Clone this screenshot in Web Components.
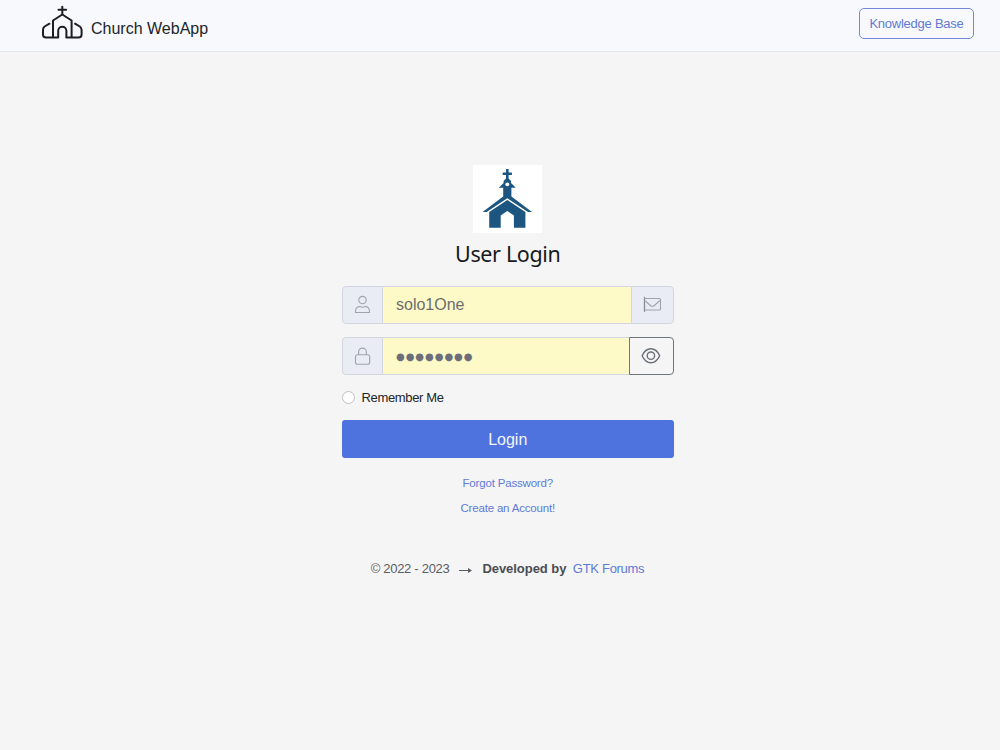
<!DOCTYPE html>
<html lang="en">
<head>
<meta charset="utf-8">
<title>Church WebApp</title>
<style>
  body {
    margin: 0;
    min-height: 750px;
    background: #f5f5f5;
    color: #212529;
    font-family: "Liberation Sans", Arial, sans-serif;
    font-size: 16px;
  }
</style>
</head>
<body>

<app-header brand="Church WebApp">
  <outline-link>Knowledge Base</outline-link>
</app-header>

<login-card heading="User Login">
  <input-row value="solo1One">
    <app-icon slot="before" name="person"></app-icon>
    <app-icon slot="after" name="mail"></app-icon>
  </input-row>
  <input-row value="●●●●●●●●" secret>
    <app-icon slot="before" name="lock"></app-icon>
    <app-icon slot="after" name="eye"></app-icon>
  </input-row>
  <remember-me>Remember Me</remember-me>
  <login-button>Login</login-button>
  <text-link slot="links">Forgot Password?</text-link>
  <text-link slot="links">Create an Account!</text-link>
</login-card>

<app-footer>
  <span slot="years">© 2022 - 2023</span>
  <span slot="label">Developed by</span>
  <text-link slot="link">GTK Forums</text-link>
</app-footer>

<script>
const icons = {
  person: '<circle cx="7.500" cy="4.100" r="3.700"/><path d="M.5 16.500v-.8c0-3 1.800-5.200 4.400-5.200q2.600 1.400 5.200 0c2.600 0 4.400 2.200 4.400 5.200v.8z"/>',
  lock: '<rect x=".5" y="7.800" width="14.200" height="9.400" rx="2"/><path d="M3.600 7.800V5a3.900 3.900 0 0 1 7.800 0v2.800"/>',
  mail: '<path d="M.5 .8v15" stroke-width="1.300" stroke="#858b96"/><path d="M.5 2.500h15q1 0 1 1v9.500q0 1-1 1H.5M1.500 5l4.800 4.500q2 1.500 4 0L16 4.500"/>',
  eye: '<path d="M-.9 8.700C3.300-.6 12.500-.6 16.700 8.700 12.500 18 3.300 18-.9 8.700z"/><circle cx="7.900" cy="8.700" r="3.700"/>'
};

class AppIcon extends HTMLElement {
  constructor () {
    super();
    this.attachShadow({ mode: 'open' });
  }

  connectedCallback () {
    const name = this.getAttribute('name');
    this.shadowRoot.innerHTML = `
    <style>
      :host { display: block; width: 16px; height: 18px; }
      svg {
        display: block;
        overflow: visible;
        fill: none;
        stroke: ${name === 'eye' ? '#6a7076' : '#9fa3ab'};
        stroke-width: ${name === 'eye' ? 1.4 : 1.1};
        stroke-linejoin: round;
      }
    </style>
    <svg width="16" height="18" viewBox="0 0 16 18">${icons[name]}</svg>`;
  }
}

class AppHeader extends HTMLElement {
  constructor () {
    super();
    this.attachShadow({ mode: 'open' });
  }

  connectedCallback () {
    this.shadowRoot.innerHTML = `
    <style>
      :host {
        display: flex;
        justify-content: space-between;
        align-items: flex-start;
        box-sizing: border-box;
        height: 52px;
        padding: 5px 26px 0 41px;
        background: #f8f9fd;
        border-bottom: 1px solid #e3e6ee;
      }
      .brand { display: flex; gap: 8px; }
      .brand span { margin-top: 14px; line-height: 19px; font-size: 16px; }
      svg {
        fill: none;
        stroke: #1d1f22;
        stroke-width: 2;
        stroke-linecap: round;
        stroke-linejoin: round;
      }
      ::slotted(*) { margin-top: 3px; }
    </style>
    <div class="brand">
      <svg width="42" height="35" viewBox="0 0 42 35">
        <path d="M21.300 1.800V9M17.500 4.700h7.600"/>
        <path d="M12 32V15.500L21.300 9.500l9.300 6V32"/>
        <path d="M17.200 32v-6.200a4.100 4.100 0 0 1 8.200 0V32"/>
        <path d="M8.500 18.700L3.600 21.500Q2 22.800 2 25v4.500q0 3 3 3H17.200M25.400 32.500H37.600q3 0 3-3V25q0-2.200-1.800-3.500L34 18.700"/>
      </svg>
      <span>${this.getAttribute('brand')}</span>
    </div>
    <slot></slot>`;
  }
}

class OutlineLink extends HTMLElement {
  constructor () {
    super();
    this.attachShadow({ mode: 'open' });
    this.shadowRoot.innerHTML = `
    <style>
      :host {
        display: block;
        box-sizing: border-box;
        width: 115px;
        height: 31px;
        border: 1px solid #7389d8;
        border-radius: 5px;
        color: #6179d3;
        font-size: 13px;
        letter-spacing: -0.25px;
        line-height: 29px;
        text-align: center;
        white-space: nowrap;
      }
    </style>
    <slot></slot>`;
  }
}

class LoginCard extends HTMLElement {
  constructor () {
    super();
    this.attachShadow({ mode: 'open' });
  }

  connectedCallback () {
    this.shadowRoot.innerHTML = `
    <style>
      :host {
        display: flex;
        flex-direction: column;
        width: 331.5px;
        margin: 113px 0 0 342px;
      }
      .logo { display: block; margin: 0 auto; background: #fff; }
      h1 {
        margin: 6px 0 17px;
        font: 400 21.5px/30px "Noto Sans", "Open Sans", sans-serif;
        letter-spacing: -0.35px;
        text-align: center;
        color: #17191c;
      }
      .links {
        display: flex;
        flex-direction: column;
        align-items: center;
        gap: 11px;
        margin-top: 18px;
        font-size: 11.5px;
        letter-spacing: -0.18px;
        line-height: 14px;
      }
    </style>
    <svg class="logo" width="69" height="68" viewBox="0 0 69 68" fill="#1c5680">
      <path d="M33 4h2.600v3.400h3.300v2.600h-3.300V13.500l2.400 2.500v2l4.800 4.800h-4.400v8.700L59 46.900h-4L34.300 33.300 13.600 46.900h-4L30.200 31.500v-8.700h-4.400l4.800-4.800v-2l2.400-2.500V10h-3.300V7.400H33z"/>
      <circle cx="34.300" cy="19.300" r="1.900" fill="#fff"/>
      <path d="M34.300 35L52.400 47v15.800H40.900V50.500L34.300 46 27.700 50.500v12.300H16.200V47z"/>
    </svg>
    <h1>${this.getAttribute('heading')}</h1>
    <slot></slot>
    <div class="links"><slot name="links"></slot></div>`;
  }
}

class InputRow extends HTMLElement {
  constructor () {
    super();
    this.attachShadow({ mode: 'open' });
  }

  connectedCallback () {
    this.shadowRoot.innerHTML = `
    <style>
      :host {
        display: flex;
        box-sizing: border-box;
        height: 38px;
        margin-bottom: 13px;
      }
      div { box-sizing: border-box; border: 1px solid #d3d6df; }
      .addon {
        display: flex;
        align-items: center;
        justify-content: center;
        width: 41px;
        background: #e9ecf4;
        border-radius: 4px 0 0 4px;
      }
      .field {
        flex: 1;
        border-left: 0;
        border-right: 0;
        padding-left: 13px;
        background: #fefac7;
        color: #6c6e70;
        font-size: 16px;
        line-height: 36px;
      }
      .last { width: 43px; border-radius: 0 4px 4px 0; }
      :host([secret]) .last {
        width: 45px;
        background: #f5f5f5;
        border-color: #6f757b;
      }
      :host([secret]) .field {
        font-family: "DejaVu Sans", sans-serif;
        font-size: 10px;
        letter-spacing: 0.95px;
        line-height: 37px;
        color: #6c6e7a;
      }
    </style>
    <div class="addon"><slot name="before"></slot></div>
    <div class="field">${this.getAttribute('value')}</div>
    <div class="addon last"><slot name="after"></slot></div>`;
  }
}

class RememberMe extends HTMLElement {
  constructor () {
    super();
    this.attachShadow({ mode: 'open' });
    this.shadowRoot.innerHTML = `
    <style>
      :host {
        display: flex;
        align-items: center;
        gap: 6.5px;
        height: 19px;
        font-size: 13px;
        letter-spacing: -0.35px;
      }
      i {
        box-sizing: border-box;
        width: 13px;
        height: 13px;
        border: 1px solid #bfc1c5;
        border-radius: 50%;
        background: #fff;
      }
    </style>
    <i></i><span><slot></slot></span>`;
  }
}

class LoginButton extends HTMLElement {
  constructor () {
    super();
    this.attachShadow({ mode: 'open' });
    this.shadowRoot.innerHTML = `
    <style>
      :host {
        display: block;
        height: 38px;
        margin-top: 13px;
        border-radius: 3px;
        background: #4e73df;
        color: #f4f6fd;
        line-height: 39px;
        text-align: center;
      }
    </style>
    <slot></slot>`;
  }
}

class TextLink extends HTMLElement {
  constructor () {
    super();
    this.attachShadow({ mode: 'open' });
    this.shadowRoot.innerHTML = `
    <style>
      :host { display: block; color: #5f7ad8; cursor: pointer; }
    </style>
    <slot></slot>`;
  }
}

class AppFooter extends HTMLElement {
  constructor () {
    super();
    this.attachShadow({ mode: 'open' });
    this.shadowRoot.innerHTML = `
    <style>
      :host {
        display: flex;
        width: 331px;
        justify-content: center;
        margin: 46px 0 0 342px;
        color: #5a5c62;
        font-size: 13px;
        letter-spacing: -0.3px;
        line-height: 16px;
        white-space: nowrap;
      }
      svg { margin: 0 10px; }
      b { margin-right: 6.5px; color: #4b4d53; letter-spacing: -0.05px; }
    </style>
    <slot name="years"></slot>
    <svg width="13" height="16" fill="none" stroke="#5a5c62"><path d="M0 9.500h11"/><path d="M9 7l4 2.500-4 2.500z" fill="#5a5c62" stroke="none"/></svg>
    <b><slot name="label"></slot></b>
    <slot name="link"></slot>`;
  }
}

customElements.define('app-icon', AppIcon);
customElements.define('app-header', AppHeader);
customElements.define('outline-link', OutlineLink);
customElements.define('login-card', LoginCard);
customElements.define('input-row', InputRow);
customElements.define('remember-me', RememberMe);
customElements.define('login-button', LoginButton);
customElements.define('text-link', TextLink);
customElements.define('app-footer', AppFooter);
</script>
</body>
</html>
